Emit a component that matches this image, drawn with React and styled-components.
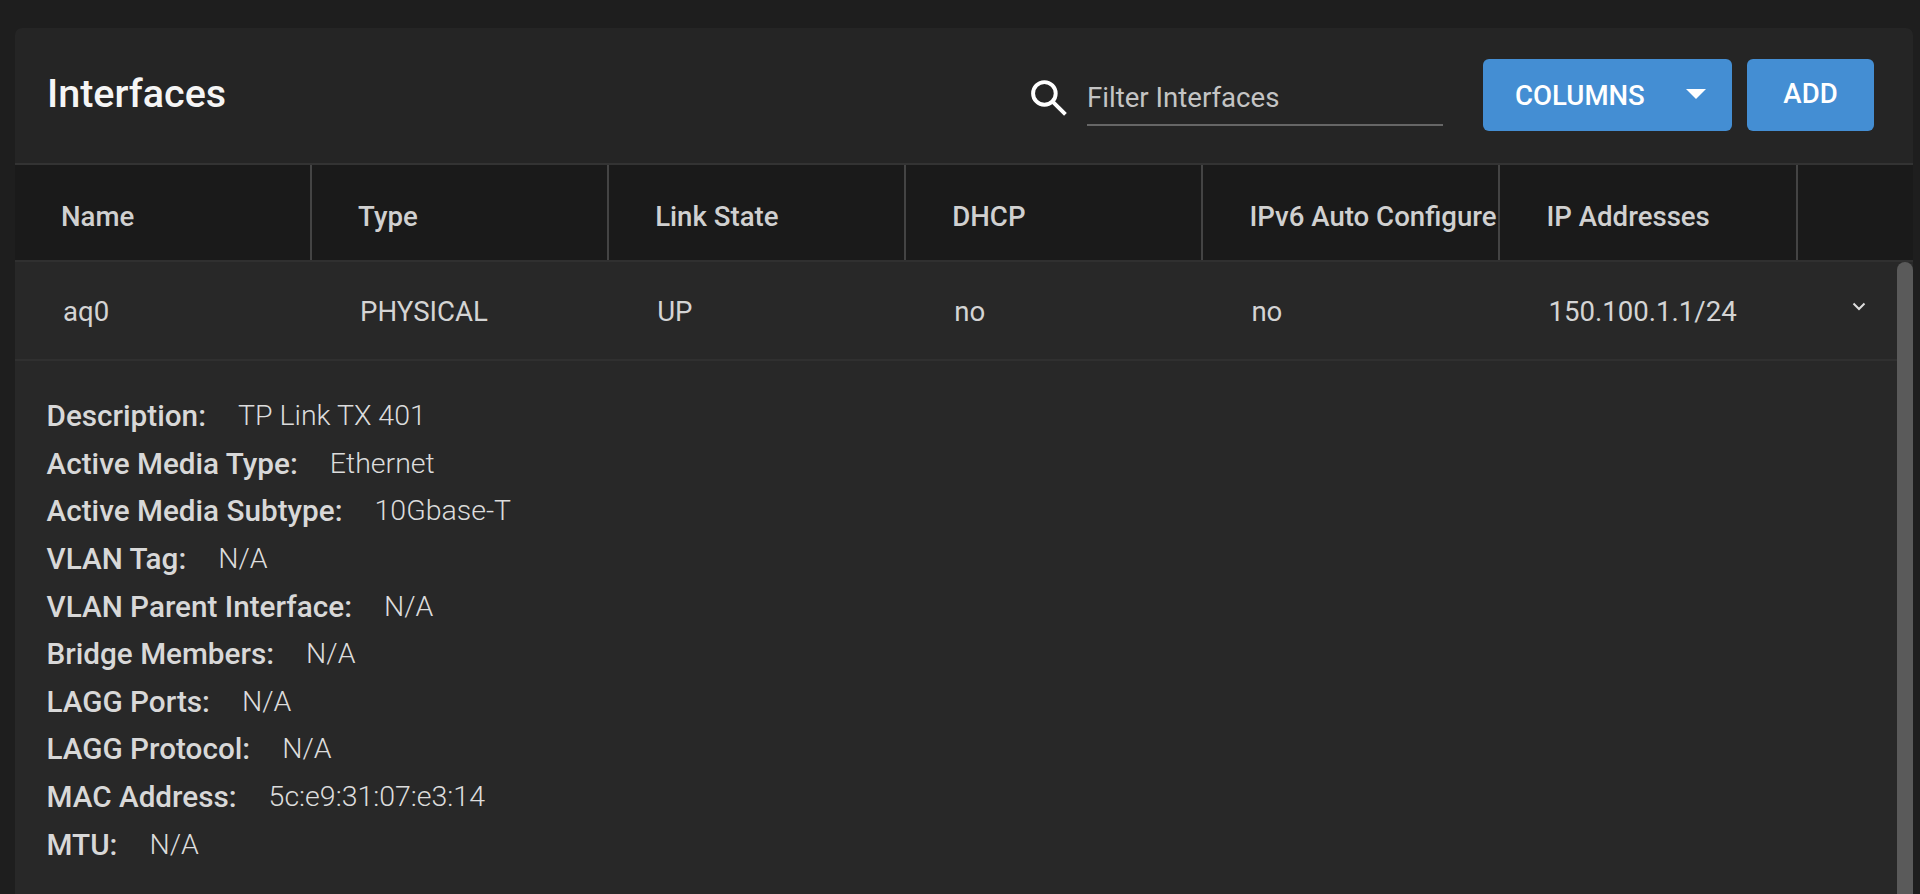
import React from 'react';
import styled, { createGlobalStyle } from 'styled-components';

const GlobalStyle = createGlobalStyle`
  html, body {
    margin: 0;
    height: 100%;
    overflow: hidden;
    background: #1e1e1e;
    font-family: Roboto, "Liberation Sans", sans-serif;
  }
`;

const Page = styled.div`
  height: 100vh;
  box-sizing: border-box;
  padding: 28px 7px 0 15px;
`;

const Card = styled.section`
  height: 100%;
  display: flex;
  flex-direction: column;
  background: #252525;
  border-radius: 7px 7px 0 0;
  overflow: hidden;
`;

const Toolbar = styled.header`
  flex: 0 0 137px;
  box-sizing: border-box;
  display: flex;
  align-items: center;
  padding: 0 39px 1px 32px;
  border-bottom: 2px solid #333;
`;

const Title = styled.h1`
  margin: 0 auto 0 0;
  padding-bottom: 4px;
  font-size: 39.5px;
  font-weight: 500;
  color: #f5f5f5;
`;

const Search = styled.label`
  display: flex;
  align-items: center;
  gap: 20px;
  margin-right: 40px;
  color: #fff;
`;

const SearchIcon = styled.svg`
  margin-top: 5px;
`;

const FilterInput = styled.input`
  width: 356px;
  height: 62px;
  box-sizing: border-box;
  padding: 6px 0 0;
  background: transparent;
  border: 0;
  border-bottom: 2px solid #666;
  outline: none;
  font: 400 27.6px Roboto, sans-serif;
  color: #ddd;
  &::placeholder {
    color: #c4c4c4;
    opacity: 1;
  }
`;

const Button = styled.button`
  height: 72px;
  box-sizing: border-box;
  display: flex;
  align-items: center;
  justify-content: ${(props) => (props.$caret ? 'flex-start' : 'center')};
  gap: 41px;
  width: ${(props) => props.$width}px;
  margin-left: ${(props) => props.$gap || 0}px;
  padding: 0 0 ${(props) => props.$lift || 0}px ${(props) => (props.$caret ? 32 : 0)}px;
  background: #448ed3;
  border: 0;
  border-radius: 6px;
  font: 500 27.6px Roboto, sans-serif;
  color: #fff;
`;

const Caret = styled.span`
  width: 0;
  height: 0;
  border-left: 10px solid transparent;
  border-right: 10px solid transparent;
  border-top: 10px solid #fff;
  margin-bottom: 3px;
`;

const HeaderRow = styled.div`
  flex: 0 0 97px;
  box-sizing: border-box;
  display: grid;
  grid-template-columns: repeat(6, 297.1px) 1fr;
  background: #1a1a1a;
  border-bottom: 2px solid #303030;
`;

const HeaderCell = styled.div`
  display: flex;
  align-items: center;
  box-sizing: border-box;
  padding: 8px 0 0 46px;
  white-space: nowrap;
  font-size: 27.6px;
  font-weight: 500;
  color: #d0d0d0;
  border-right: ${(props) => (props.$last ? '0' : '2px solid #444')};
`;

const Body = styled.div`
  flex: 1;
  min-height: 0;
  display: flex;
  background: #282828;
`;

const Content = styled.div`
  flex: 1;
  min-width: 0;
`;

const ScrollThumb = styled.div`
  flex: 0 0 16px;
  background: #5a5a5a;
  border-radius: 8px 8px 0 0;
`;

const Row = styled.div`
  height: 99px;
  box-sizing: border-box;
  display: grid;
  grid-template-columns: repeat(6, 297.1px) 1fr;
  align-items: center;
  border-bottom: 2px solid #303030;
`;

const Cell = styled.div`
  padding: 2px 0 0 48px;
  font-size: 27.6px;
  color: #d4d4d4;
`;

const Chevron = styled.div`
  display: flex;
  justify-content: flex-end;
  padding: 0 31px 8px 0;
  color: #ddd;
`;

const Details = styled.div`
  padding: 31px 32px 24px 31.5px;
`;

const Detail = styled.div`
  display: flex;
  gap: 32px;
  height: 47.6px;
  align-items: center;
`;

const Label = styled.span`
  font-size: 29.7px;
  font-weight: 500;
  color: #d8d8d8;
`;

const Value = styled.span`
  font-size: 28.5px;
  font-weight: 300;
  color: #dcdcdc;
`;

const columns = ['Name', 'Type', 'Link State', 'DHCP', 'IPv6 Auto Configure', 'IP Addresses', ''];
const cells = ['aq0', 'PHYSICAL', 'UP', 'no', 'no', '150.100.1.1/24'];
const details = [
  ['Description:', 'TP Link TX 401'],
  ['Active Media Type:', 'Ethernet'],
  ['Active Media Subtype:', '10Gbase-T'],
  ['VLAN Tag:', 'N/A'],
  ['VLAN Parent Interface:', 'N/A'],
  ['Bridge Members:', 'N/A'],
  ['LAGG Ports:', 'N/A'],
  ['LAGG Protocol:', 'N/A'],
  ['MAC Address:', '5c:e9:31:07:e3:14'],
  ['MTU:', 'N/A'],
];

export default function App() {
  return (
    <Page>
      <GlobalStyle />
      <Card>
        <Toolbar>
          <Title>Interfaces</Title>
          <Search>
            <SearchIcon width="37" height="37" viewBox="0 0 36 36" fill="none" stroke="currentColor" strokeWidth="3.8">
              <circle cx="14" cy="14" r="11" />
              <path d="M22 22l12.5 12.5" />
            </SearchIcon>
            <FilterInput placeholder="Filter Interfaces" />
          </Search>
          <Button $width={249} $caret>
            COLUMNS
            <Caret />
          </Button>
          <Button $width={127} $gap={15} $lift={4}>ADD</Button>
        </Toolbar>
        <HeaderRow>
          {columns.map((name, i) => (
            <HeaderCell key={name || 'actions'} $last={i === columns.length - 1}>{name}</HeaderCell>
          ))}
        </HeaderRow>
        <Body>
          <Content>
            <Row>
              {cells.map((text, i) => <Cell key={`${text}-${i}`}>{text}</Cell>)}
              <Chevron>
                <svg width="14" height="9" viewBox="0 0 14 9" fill="none" stroke="currentColor" strokeWidth="2">
                  <path d="M1.5 1.5L7 7l5.5-5.5" />
                </svg>
              </Chevron>
            </Row>
            <Details>
              {details.map(([label, value]) => (
                <Detail key={label}>
                  <Label>{label}</Label>
                  <Value>{value}</Value>
                </Detail>
              ))}
            </Details>
          </Content>
          <ScrollThumb />
        </Body>
      </Card>
    </Page>
  );
}
